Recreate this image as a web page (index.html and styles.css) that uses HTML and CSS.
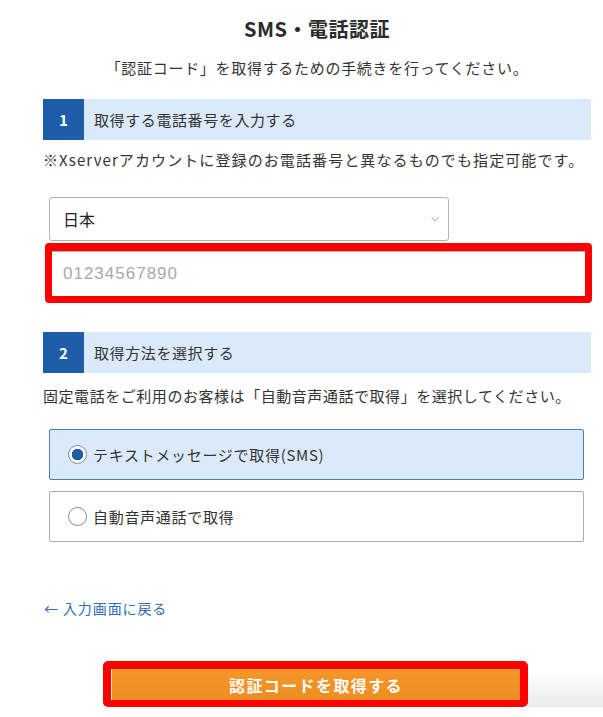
FILE: index.html
```html
<!DOCTYPE html>
<html lang="ja">
<head>
<meta charset="utf-8">
<title>SMS・電話認証</title>
<link rel="stylesheet" href="styles.css">
</head>
<body>
<main class="page">
  <h1 class="title">SMS・電話認証</h1>
  <p class="lead">「認証コード」を取得するための手続きを行ってください。</p>

  <section class="step">
    <span class="step-num">1</span>
    <span class="step-label">取得する電話番号を入力する</span>
  </section>
  <p class="note">※Xserverアカウントに登録のお電話番号と異なるものでも指定可能です。</p>

  <div class="select-wrap">
    <select class="select">
      <option>日本</option>
    </select>
    <svg class="chevron" width="8" height="5" viewBox="0 0 8 5"><polyline points="0.5,0.5 4,4 7.5,0.5" fill="none" stroke="#a8a8a8" stroke-width="1"/></svg>
  </div>

  <div class="highlight">
    <input class="tel" type="text" placeholder="01234567890">
  </div>

  <section class="step step-2">
    <span class="step-num">2</span>
    <span class="step-label">取得方法を選択する</span>
  </section>
  <p class="note note-2">固定電話をご利用のお客様は「自動音声通話で取得」を選択してください。</p>

  <div class="options">
    <label class="option is-selected">
      <input class="radio" type="radio" name="method" checked>
      <span class="option-text">テキストメッセージで取得(SMS)</span>
    </label>
    <label class="option">
      <input class="radio" type="radio" name="method">
      <span class="option-text">自動音声通話で取得</span>
    </label>
  </div>

  <a class="back" href="#">← 入力画面に戻る</a>
</main>

<footer class="footer">
  <div class="footer-left"></div>
  <div class="btn-frame">
    <button class="btn" type="button">認証コードを取得する</button>
  </div>
  <div class="footer-right"></div>
</footer>
</body>
</html>
```

FILE: styles.css
```css
html, body {
  margin: 0;
  padding: 0;
  background: #fff;
}

body {
  font-family: "Noto Sans CJK JP", "Noto Sans", sans-serif;
  color: #333;
  font-size: 15px;
}

.page {
  padding: 16px 12px 0 43px;
}

.title {
  margin: 0;
  text-align: center;
  font-size: 20px;
  line-height: 26px;
  font-weight: 700;
  letter-spacing: 0.5px;
  color: #2b2b2b;
}

.lead {
  margin: 15px 0 0;
  text-align: center;
  font-size: 15px;
  line-height: 22px;
  letter-spacing: 0.7px;
}

.step {
  margin-top: 20px;
  display: flex;
  align-items: center;
  height: 41px;
  background: #dbeafb;
}

.step-2 {
  margin-top: 29px;
}

.step-num {
  align-self: stretch;
  width: 41px;
  display: flex;
  align-items: center;
  justify-content: center;
  background: #1e5ea8;
  color: #fff;
  font-weight: 700;
  font-size: 15px;
}

.step-label {
  padding-left: 10px;
  font-size: 15px;
  letter-spacing: 0.6px;
}

.note {
  margin: 9px 0 0;
  font-size: 15px;
  line-height: 22px;
  letter-spacing: 1.1px;
}

.note-2 {
  margin-top: 12px;
  letter-spacing: 0.55px;
}

.select-wrap {
  position: relative;
  margin: 26px 0 0 6px;
  width: 400px;
  height: 44px;
}

.select {
  appearance: none;
  -webkit-appearance: none;
  box-sizing: border-box;
  width: 100%;
  height: 100%;
  margin: 0;
  padding: 0 30px 0 13px;
  border: 1px solid #b3b3b3;
  border-radius: 3px;
  background: #fff;
  font-family: "Noto Sans CJK JP", "Noto Sans", sans-serif;
  font-size: 16px;
  color: #222;
}

.chevron {
  position: absolute;
  right: 10px;
  top: 20px;
}

.highlight {
  margin: 2px -1px 0 2px;
  border: 7px solid #ff0000;
  border-top-width: 8px;
  border-radius: 4px;
  height: 45px;
}

.tel {
  box-sizing: border-box;
  display: block;
  width: 100%;
  height: 100%;
  margin: 0;
  padding: 0 0 0 11px;
  border: none;
  border-top: 1px solid #b3b3b3;
  outline: none;
  background: #fff;
  font-family: "Liberation Sans", Arial, sans-serif;
  font-size: 17px;
  letter-spacing: 1px;
  color: #333;
}

.tel::placeholder {
  color: #a9a9a9;
}

.options {
  margin: 22px 7px 0 6px;
  display: flex;
  flex-direction: column;
  gap: 11px;
}

.option {
  box-sizing: border-box;
  height: 51px;
  display: flex;
  align-items: center;
  gap: 6px;
  padding-left: 18px;
  border: 1px solid #ababab;
  border-radius: 2px;
  background: #fff;
  cursor: pointer;
}

.option.is-selected {
  background: #dbeafb;
  border-color: #4a7cba;
}

.radio {
  appearance: none;
  -webkit-appearance: none;
  box-sizing: border-box;
  width: 19px;
  height: 19px;
  margin: 0;
  border: 1px solid #8a8a8a;
  border-radius: 50%;
  background: #fff;
}

.radio:checked {
  background: radial-gradient(circle, #1e5ea8 0 5.5px, #fff 6px);
}

.option-text {
  font-size: 15px;
  letter-spacing: 0.7px;
  color: #333;
}

.back {
  display: inline-block;
  margin: 55px 0 0 1px;
  font-size: 14px;
  line-height: 22px;
  letter-spacing: 0.9px;
  color: #2f6db3;
  text-decoration: none;
}

.footer {
  margin-top: 42px;
  display: flex;
  height: 46px;
}

.footer-left {
  width: 103px;
  flex: none;
}

.btn-frame {
  box-sizing: border-box;
  width: 425px;
  flex: none;
  border: 8px solid #ff0000;
  border-bottom-width: 7px;
  border-radius: 5px;
}

.btn {
  display: block;
  width: 100%;
  height: 100%;
  margin: 0;
  padding: 0;
  border: none;
  border-left: 1px solid #fbe7cf;
  background: linear-gradient(#f6972a, #ee8d21);
  color: #fff;
  font-family: "Noto Sans CJK JP", "Noto Sans", sans-serif;
  font-size: 16px;
  font-weight: 700;
  letter-spacing: 1.4px;
  cursor: pointer;
}

.footer-right {
  flex: 1;
  background: linear-gradient(#ffffff 20%, #ebebeb);
}
```
